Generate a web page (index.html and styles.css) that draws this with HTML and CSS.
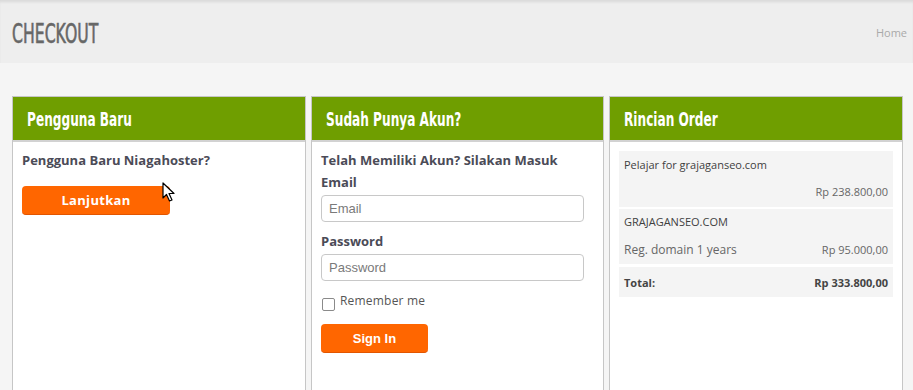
FILE: index.html
```html
<!DOCTYPE html>
<html lang="id">
<head>
<meta charset="utf-8">
<title>Checkout</title>
<link rel="stylesheet" href="styles.css">
</head>
<body>
<header class="topbar">
  <h1 class="page-title"><span class="cond">CHECKOUT</span></h1>
  <a class="crumb" href="#">Home</a>
</header>
<main class="columns">
  <section class="panel">
    <div class="panel-head"><h2 class="cond">Pengguna Baru</h2></div>
    <div class="panel-body">
      <p class="lead">Pengguna Baru Niagahoster?</p>
      <button class="btn btn-wide">Lanjutkan</button>
    </div>
  </section>
  <section class="panel">
    <div class="panel-head"><h2 class="cond">Sudah Punya Akun?</h2></div>
    <div class="panel-body">
      <p class="lead">Telah Memiliki Akun? Silakan Masuk</p>
      <label class="field-label">Email</label>
      <input class="input" type="text" placeholder="Email">
      <label class="field-label pw">Password</label>
      <input class="input" type="password" placeholder="Password">
      <label class="remember"><span class="check"></span><span>Remember me</span></label>
      <button class="btn btn-sign">Sign In</button>
    </div>
  </section>
  <section class="panel">
    <div class="panel-head"><h2 class="cond">Rincian Order</h2></div>
    <div class="panel-body order">
      <div class="row row-1">
        <div class="item">Pelajar for grajaganseo.com</div>
        <div class="price">Rp 238.800,00</div>
      </div>
      <div class="row row-2">
        <div class="item">GRAJAGANSEO.COM</div>
        <div class="line"><span class="sub">Reg. domain 1 years</span><span class="price">Rp 95.000,00</span></div>
      </div>
      <div class="row row-3">
        <span class="total">Total:</span><span class="total">Rp 333.800,00</span>
      </div>
    </div>
  </section>
</main>
<svg class="cursor" width="14" height="21" viewBox="0 0 14 21"><path d="M1 1 L1 16 L4.5 12.5 L7.5 19 L10 18 L7 11.5 L12 11.5 Z" fill="#fff" stroke="#000" stroke-width="1.2" stroke-linejoin="round"/></svg>
</body>
</html>
```
FILE: styles.css
```css
* { box-sizing: border-box; }
html, body { margin: 0; padding: 0; }
body {
  background: #f5f5f5;
  font-family: "Open Sans", "DejaVu Sans", sans-serif;
  color: #4a4a55;
  width: 913px;
  height: 390px;
  overflow: hidden;
  position: relative;
}
.cond {
  font-family: "DejaVu Sans Condensed", "DejaVu Sans", sans-serif;
  font-stretch: condensed;
  display: inline-block;
  transform-origin: 0 50%;
  margin: 0;
  font-weight: bold;
}
.topbar {
  height: 63px;
  background: #eeeeee;
  box-shadow: inset 0 3px 3px -1px rgba(0,0,0,0.09);
  display: flex;
  align-items: center;
  justify-content: space-between;
  padding: 0 6px 0 12px;
}
.page-title {
  margin: 0;
  font-size: 26px;
  font-weight: normal;
  color: #676767;
  line-height: 30px;
  padding-top: 3px;
}
.page-title .cond {
  font-weight: normal;
  transform: scaleX(0.67);
  -webkit-text-stroke: 0.6px #676767;
}
.crumb {
  font-size: 11px;
  color: #a9a9a9;
  text-decoration: none;
  padding-top: 1px;
}
.columns {
  display: grid;
  grid-template-columns: 294px 293px 294px;
  gap: 5px;
  padding: 33px 10px 0 12px;
}
.panel {
  background: #fff;
  border: 1px solid #c6c6c6;
  height: 320px;
}
.panel-head {
  background: #6f9e00;
  height: 45px;
  border-bottom: 2px solid #d2d2d2;
  padding: 0 14px;
  display: flex;
  align-items: center;
}
.panel-head h2 {
  color: #fff;
  font-size: 19px;
  line-height: 24px;
  transform: scaleX(0.71);
  white-space: nowrap;
}
.panel-body { padding: 9px 9px; }
.lead {
  margin: 0;
  font-size: 13px;
  font-weight: bold;
  line-height: 18px;
  color: #4b4b57;
}
.btn {
  display: block;
  border: 0;
  background: #ff6600;
  color: #fff;
  font-weight: bold;
  font-size: 13px;
  border-radius: 4px;
  border-bottom: 1px solid #e25500;
  cursor: pointer;
  padding: 0;
}
.btn-wide {
  margin-top: 17px;
  width: 148px;
  height: 29px;
  font-family: "Open Sans", sans-serif;
  letter-spacing: 0.3px;
}
.field-label {
  display: block;
  font-size: 13px;
  font-weight: bold;
  line-height: 18px;
  color: #4b4b57;
  margin-top: 4px;
}
.field-label.pw { margin-top: 10px; }
.input {
  display: block;
  margin-top: 4px;
  width: 263px;
  height: 27px;
  border: 1px solid #c8c8c8;
  border-radius: 4px;
  padding: 0 7px;
  font-family: "Liberation Sans", Arial, sans-serif;
  font-size: 13px;
  color: #555;
  background: #fff;
}
.input::placeholder { color: #7a7a7a; }
.remember {
  display: flex;
  align-items: flex-start;
  gap: 5px;
  margin-top: 13px;
  font-size: 12px;
  color: #555;
  line-height: 14px;
  letter-spacing: 0.2px;
}
.check {
  width: 13px;
  height: 13px;
  border: 1px solid #8a8a8a;
  border-radius: 2px;
  background: #fff;
  margin-top: 4px;
  margin-left: 1px;
}
.btn-sign {
  margin-top: 13px;
  width: 107px;
  height: 29px;
  font-family: "Liberation Sans", Arial, sans-serif;
}
.order { padding: 9px 9px 0 9px; }
.row {
  background: #f4f4f4;
  padding: 0 5px;
  font-size: 11px;
  color: #3f3f3f;
}
.row-1 { height: 56px; padding-top: 5px; }
.row-1 .price { text-align: right; margin-top: 9px; }
.row-2 { height: 55px; margin-top: 2px; padding-top: 4px; }
.row-3 {
  height: 30px;
  margin-top: 3px;
  display: flex;
  align-items: center;
  justify-content: space-between;
}
.item { line-height: 18px; }
.price { color: #666; line-height: 18px; font-size: 11px; }
.line {
  display: flex;
  justify-content: space-between;
  align-items: center;
  margin-top: 10px;
}
.sub { font-size: 12px; color: #666; line-height: 18px; }
.total { font-weight: bold; color: #444; }
.cursor {
  position: absolute;
  left: 162px;
  top: 182px;
}
```
